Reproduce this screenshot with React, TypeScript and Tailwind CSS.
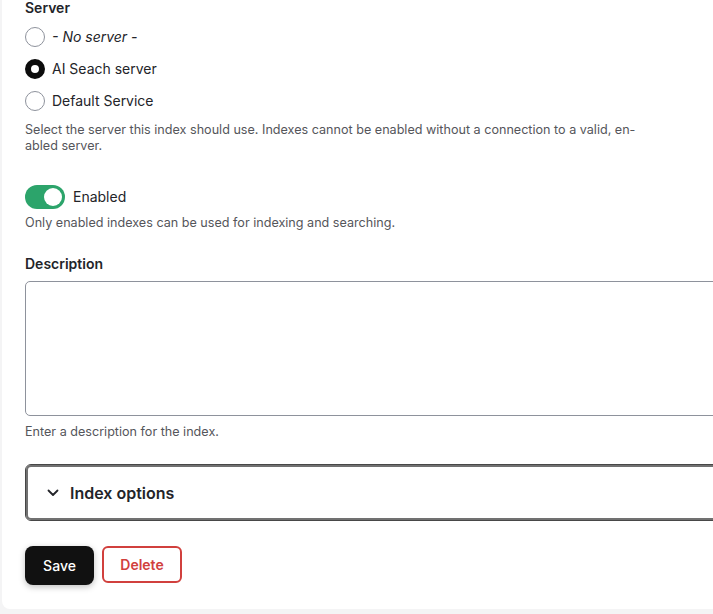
import React from "react";

function Radio({ checked, label, italic }: { checked?: boolean; label: string; italic?: boolean }) {
  return (
    <div className="flex h-8 items-center gap-[7px]">
      {checked ? (
        <span className="box-border h-5 w-5 rounded-full border-[6px] border-[#0c0c0c] bg-white" />
      ) : (
        <span className="box-border h-5 w-5 rounded-full border border-[#8e929c] bg-white" />
      )}
      <span className={`text-[14px] leading-5 text-[#232429] ${italic ? "italic" : ""}`}>{label}</span>
    </div>
  );
}

export default function App() {
  return (
    <div
      className="h-[614px] w-[713px] overflow-hidden bg-[#f4f4f5]"
      style={{ fontFamily: "Inter, 'Liberation Sans', sans-serif" }}
    >
      <div className="ml-[2px] h-[611px] w-[760px] rounded-b-lg bg-white pl-[23px]">
        <div className="-mt-[2px] flex flex-col">
          <div className="text-[14px] font-semibold leading-5 text-[#232429]">Server</div>
          <div className="mt-[3px] flex flex-col">
            <Radio label="- No server -" italic />
            <Radio label="AI Seach server" checked />
            <Radio label="Default Service" />
          </div>
          <p className="mt-[5px] w-[680px] text-[12.6px] leading-4 text-[#55565b]">
            Select the server this index should use. Indexes cannot be enabled without a connection to a valid, en-
            <br />
            abled server.
          </p>

          <div className="mt-[31px] flex h-6 items-center gap-2">
            <span className="flex h-6 w-10 items-center justify-end rounded-full bg-[#2ca46b] pr-[3px]">
              <span className="h-[18px] w-[18px] rounded-full bg-white" />
            </span>
            <span className="text-[14px] leading-5 text-[#232429]">Enabled</span>
          </div>
          <p className="mt-[6px] text-[12.6px] leading-4 text-[#55565b]">
            Only enabled indexes can be used for indexing and searching.
          </p>

          <div className="mt-[23px] text-[14px] font-semibold leading-5 text-[#232429]">Description</div>
          <div className="mt-[7px] h-[135px] w-[720px] rounded-[5px] border border-[#8e929c] bg-white" />
          <p className="mt-2 text-[12.6px] leading-4 text-[#55565b]">Enter a description for the index.</p>

          <div className="mt-6 flex h-[57px] w-[720px] items-center gap-[11px] rounded-[6px] border border-[#474747] pl-[21px] shadow-[inset_0_0_0_2px_#717171]">
            <svg width="12" height="8" viewBox="0 0 12 8" fill="none">
              <path d="M1.5 1.5 6 6l4.5-4.5" stroke="#232429" strokeWidth="1.8" strokeLinecap="round" strokeLinejoin="round" />
            </svg>
            <span className="text-[16px] font-semibold leading-6 text-[#232429]">Index options</span>
          </div>

          <div className="mt-[25px] flex items-start gap-2">
            <button className="h-[39px] w-[69px] rounded-lg bg-[#111111] text-[14px] font-medium text-white shadow-[0_2px_6px_rgba(0,0,0,0.25)]">
              Save
            </button>
            <button className="h-[37px] w-[80px] rounded-[6px] border-2 border-[#d1403d] bg-white text-[14px] font-semibold text-[#d1403d]">
              Delete
            </button>
          </div>
        </div>
      </div>
    </div>
  );
}
